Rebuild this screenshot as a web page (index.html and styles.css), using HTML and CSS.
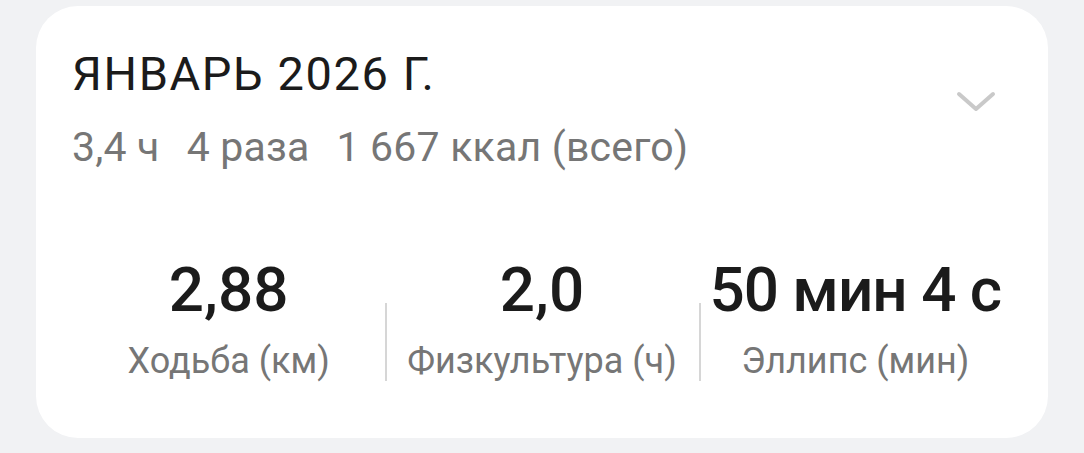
FILE: index.html
```html
<!DOCTYPE html>
<html lang="ru">
<head>
<meta charset="utf-8">
<title>Январь 2026</title>
<link rel="stylesheet" href="styles.css">
</head>
<body>
<section class="card">
  <header class="card-head">
    <div class="head-text">
      <h1 class="title">ЯНВАРЬ 2026 Г.</h1>
      <p class="summary"><span>3,4 ч</span><span>4 раза</span><span>1 667 ккал (всего)</span></p>
    </div>
    <svg class="chevron" width="40" height="24" viewBox="0 0 40 24" aria-hidden="true">
      <path d="M3 4 L20 19 L37 4" fill="none" stroke="#c9c9c9" stroke-width="4" stroke-linecap="round" stroke-linejoin="round"/>
    </svg>
  </header>
  <div class="stats">
    <div class="stat">
      <div class="stat-value">2,88</div>
      <div class="stat-label">Ходьба (км)</div>
    </div>
    <div class="stat">
      <div class="stat-value">2,0</div>
      <div class="stat-label">Физкультура (ч)</div>
    </div>
    <div class="stat">
      <div class="stat-value">50 мин 4 с</div>
      <div class="stat-label">Эллипс (мин)</div>
    </div>
  </div>
</section>
</body>
</html>
```

FILE: styles.css
```css
* { box-sizing: border-box; }

html, body {
  margin: 0;
  padding: 0;
  background: #f1f2f4;
  font-family: Roboto, "Noto Sans", sans-serif;
}

body {
  padding: 6px 36px 15px;
}

.card {
  background: #ffffff;
  border-radius: 42px;
  height: 432px;
  padding: 40px 36px 0;
}

.card-head {
  display: flex;
  justify-content: space-between;
  align-items: flex-start;
}

.title {
  margin: 0;
  font-size: 47px;
  line-height: 56px;
  font-weight: 400;
  letter-spacing: 1.6px;
  color: #1b1b1b;
}

.summary {
  margin: 20px 0 0;
  font-size: 41px;
  line-height: 50px;
  letter-spacing: 0.2px;
  color: #767676;
  display: flex;
  gap: 27px;
}

.chevron {
  margin: 44px 16px 0 0;
}

.stats {
  display: grid;
  grid-template-columns: repeat(3, 1fr);
  margin-top: 82px;
}

.stat {
  display: flex;
  flex-direction: column;
  align-items: center;
  position: relative;
}

/* thin separators between the columns */
.stat + .stat::before {
  content: "";
  position: absolute;
  left: 0;
  top: 49px;
  height: 78px;
  border-left: 2px solid #d6d6d6;
}

.stat-value {
  font-size: 62px;
  line-height: 72px;
  font-weight: 500;
  color: #1b1b1b;
}

.stat:last-child .stat-value {
  letter-spacing: -1px;
}

.stat-label {
  margin-top: 13px;
  font-size: 36px;
  line-height: 44px;
  color: #767676;
}
```
